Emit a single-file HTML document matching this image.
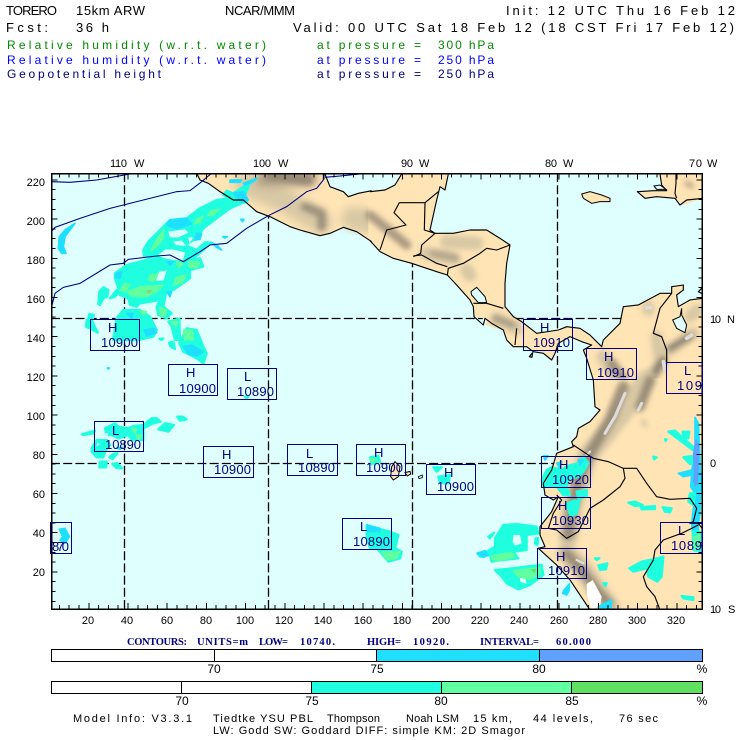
<!DOCTYPE html>
<html><head><meta charset="utf-8"><style>
html,body{margin:0;padding:0;background:#fff;width:740px;height:740px;overflow:hidden}
svg{display:block}
text{font-family:"Liberation Sans",sans-serif;font-size:13px;fill:#000}
.ax text{font-size:11px}
.lb text{font-size:12px}
.f text{font-size:11px}
.h3 text{font-size:12px}
.g text{fill:#008c00}.b text{fill:#0000ff}.n text{fill:#000080}
.c text{font-family:"Liberation Serif",serif;font-weight:bold;font-size:10.5px;fill:#000080}
.cs{fill:none;stroke:#000;stroke-width:3.4;stroke-linejoin:round}
.ctr{fill:none;stroke:#000080;stroke-width:3.2}
.l{fill:#ffe4b5}
.c1{fill:#1fffdf;stroke:#1fffdf;stroke-width:7;stroke-linejoin:round}
.c2{fill:#1fdfff;stroke:#1fdfff;stroke-width:5;stroke-linejoin:round}
.c3{fill:#60ff9f;stroke:#60ff9f;stroke-width:4;stroke-linejoin:round}
.c4{fill:#60e060}
.c5{fill:#60a0ff;stroke:#60a0ff;stroke-width:3;stroke-linejoin:round}
.w{fill:#dfffff}
.t1{fill:none;stroke:#d8c8a4;stroke-linecap:round;stroke-linejoin:round}
.t2{fill:none;stroke:#8f8270;stroke-linecap:round;stroke-linejoin:round}
.t3{fill:none;stroke:#dcdcdc;stroke-linecap:round}
</style></head><body>
<svg width="740" height="740" viewBox="0 0 740 740" xmlns="http://www.w3.org/2000/svg">
<defs>
<clipPath id="m"><rect x="52" y="174" width="650" height="435"/></clipPath>
<filter id="bl" x="-30%" y="-30%" width="160%" height="160%"><feGaussianBlur stdDeviation="14"/></filter>
<filter id="bs" x="-30%" y="-30%" width="160%" height="160%"><feGaussianBlur stdDeviation="8"/></filter>
</defs>
<rect x="0" y="0" width="740" height="740" fill="#fff"/>
<!-- header -->
<text x="6" y="15" textLength="51">TORERO</text><text x="76" y="15" textLength="69">15km ARW</text><text x="225" y="15" textLength="70">NCAR/MMM</text>
<text x="506" y="15" textLength="229">Init: 12 UTC Thu 16 Feb 12</text>
<text x="6" y="32" textLength="42">Fcst:</text><text x="76" y="32" textLength="33">36 h</text>
<text x="293" y="32" textLength="441">Valid: 00 UTC Sat 18 Feb 12 (18 CST Fri 17 Feb 12)</text>
<g class="g h3"><text x="7" y="49" textLength="259">Relative humidity (w.r.t. water)</text><text x="317" y="49" textLength="104">at pressure =</text><text x="438" y="49" textLength="56">300 hPa</text></g>
<g class="b h3"><text x="7" y="64" textLength="259">Relative humidity (w.r.t. water)</text><text x="317" y="64" textLength="104">at pressure =</text><text x="438" y="64" textLength="56">250 hPa</text></g>
<g class="n h3"><text x="7" y="78" textLength="154">Geopotential height</text><text x="317" y="78" textLength="104">at pressure =</text><text x="438" y="78" textLength="56">250 hPa</text></g>
<!-- axis labels -->
<g class="ax">
<text x="110" y="167" textLength="17">110</text><text x="134" y="167">W</text><text x="253" y="167" textLength="18">100</text><text x="278" y="167">W</text><text x="401" y="167" textLength="12">90</text><text x="419" y="167">W</text><text x="545" y="167" textLength="12">80</text><text x="563" y="167">W</text><text x="689" y="167" textLength="13">70</text><text x="707" y="167">W</text>
<text x="710" y="323" textLength="11">10</text><text x="727" y="323">N</text><text x="710" y="467">0</text><text x="710" y="613" textLength="11">10</text><text x="728" y="613">S</text>
<g text-anchor="end"><text x="45" y="186">220</text><text x="45" y="225">200</text><text x="45" y="264">180</text><text x="45" y="303">160</text><text x="45" y="342">140</text><text x="45" y="381">120</text><text x="45" y="420">100</text><text x="45" y="459">80</text><text x="45" y="498">60</text><text x="45" y="537">40</text><text x="45" y="576">20</text></g>
<g text-anchor="middle"><text x="88" y="624">20</text><text x="127" y="624">40</text><text x="167" y="624">60</text><text x="206" y="624">80</text><text x="245" y="624">100</text><text x="284" y="624">120</text><text x="323" y="624">140</text><text x="363" y="624">160</text><text x="402" y="624">180</text><text x="441" y="624">200</text><text x="480" y="624">220</text><text x="519" y="624">240</text><text x="559" y="624">260</text><text x="598" y="624">280</text><text x="637" y="624">300</text><text x="676" y="624">320</text></g>
</g>
<!-- map -->
<g clip-path="url(#m)">
<rect x="51" y="173" width="652" height="437" fill="#dfffff"/>
<g stroke="#000" stroke-width="1.3" stroke-dasharray="9 3.2" fill="none">
<path d="M51 318.5H703M51 463.5H703M124.5 173V610M268.5 173V610M412.5 173V610M557.5 173V610"/>
</g>
<!-- land Mexico: zoom frame 3 -->
<g transform="translate(0 150) scale(.33333)">
<path class="l" d="M585 60L600 90 625 100 660 125 700 150 730 150 770 185 810 200 870 230 900 240 960 257 990 250 1030 232 1070 245 1115 275 1115 120 1075 130 1045 140 1030 125 990 110 970 60Z"/>
<g filter="url(#bl)"><path class="t1" stroke-width="70" d="M740 105L850 150 960 215M1060 205L1110 215"/><path class="t2" stroke-width="45" opacity=".75" d="M790 85L930 85"/></g>
<g filter="url(#bs)"><path class="t2" stroke-width="30" opacity=".8" d="M810 75L925 90"/><path class="t2" stroke-width="26" opacity=".8" d="M915 170L965 190 965 230"/></g>
</g>
<!-- Central America: frame 4 -->
<g transform="translate(370 150) scale(.33333)">
<path class="l" d="M-5 125L0 125 45 120 75 105 95 72 100 60 235 60 225 120 210 110 200 150 180 240 195 250 250 250 300 240 350 240 390 265 420 285 410 340 405 400 405 470 430 500 455 515 500 550 565 540 590 530 630 535 660 555 695 590 700 570 750 520 760 470 805 465 870 430 905 430 905 410 940 405 940 420 920 435 925 470 960 450 1000 445 1000 700 670 700 650 625 640 600 665 585 635 575 600 560 565 580 555 610 545 630 520 610 490 605 470 590 430 590 410 570 400 540 345 525 340 505 312 500 310 470 300 450 260 405 232 375 200 365 155 350 125 340 70 325 30 305 0 272 -5 270Z"/>
<path class="l" stroke="#000" stroke-width="3" d="M635 132L660 125 695 135 720 145 720 155 690 155 665 160 640 145Z"/>
<path class="l" d="M802 125L850 122 890 122 875 105 870 60 1000 60 1000 145 940 165 915 145 860 140 825 145Z"/>
<path class="cs" d="M870 72L875 105 890 122 850 122 802 125 825 145 860 140 915 145 930 165 950 150 998 145M918 72V100L915 130 920 145"/>
<path class="w" stroke="#000" stroke-width="3" d="M852 108L870 105 888 118 860 118Z"/>
<g filter="url(#bs)"><path class="t2" stroke-width="14" opacity=".7" d="M950 100L965 108"/><path class="t2" stroke-width="28" opacity=".75" d="M0 195L50 235 110 285"/><path class="t1" stroke-width="40" d="M170 310L250 325M230 275L320 280M290 360L300 375M380 505L440 535"/><path class="t2" stroke-width="22" opacity=".5" d="M190 310L260 325"/><path class="t2" stroke-width="18" opacity=".7" d="M375 505L430 525"/></g>
<g filter="url(#bs)"><path class="t1" stroke-width="36" d="M835 470L835 480M960 500L980 480M900 600L970 550M860 560L870 640 790 760"/><path class="t1" stroke-width="40" d="M700 620L760 720"/><path class="t2" stroke-width="20" d="M900 595L960 560"/><path class="t2" stroke-width="26" d="M880 630L800 750"/><path class="t2" stroke-width="30" opacity=".8" d="M725 640L760 690"/></g>
<path class="t3" stroke-width="11" d="M830 473L842 473M950 565L965 555M880 635L885 660"/>
<path class="w" stroke="#000" stroke-width="3" d="M303 425L320 412 345 440 350 458 325 458 305 435Z"/>
<path class="w" stroke="#000" stroke-width="3" d="M935 475L930 500 908 510 920 535 945 548 950 525 935 495Z"/>
<path class="w" d="M340 505L352 507 345 525 335 515Z"/>
</g>
<!-- South America: frame 6 -->
<g transform="translate(370 380) scale(.33333)">
<path class="l" d="M670 -5L675 80 690 90 660 125 625 145 620 170 605 185 610 200 560 220 545 270 520 310 525 345 550 360 565 350 545 395 510 440 510 465 525 500 505 505 560 555 600 600 640 660 660 690 1000 690 1000 -5Z"/>
<path class="l" stroke="#000" stroke-width="3" d="M65 260L75 245 90 260 85 290 70 300 62 290Z"/>
<path class="l" stroke="#000" stroke-width="3" d="M105 278L120 274 122 282 112 288Z"/>
<path class="w" stroke="#000" stroke-width="2.5" d="M145 290L157 285 157 293 147 296Z"/>
<g filter="url(#bs)"><path class="t1" stroke-width="60" d="M830 0L780 70 700 170 650 230 630 300 605 390 595 470M590 520L640 570 680 630 720 680"/><path class="t2" stroke-width="34" opacity=".85" d="M760 20L720 120 660 220 625 300 605 390 595 465"/><path class="t2" stroke-width="30" opacity=".85" d="M840 0L810 80M590 520L640 575 680 630 715 670"/><path class="t1" stroke-width="16" d="M820 125L825 135"/></g>
<path class="t3" stroke-width="9" d="M765 40L735 110 705 160"/><path class="t3" stroke-width="9" d="M815 70L805 90"/>
<path fill="#fff" d="M650 612L668 600 695 650 690 680 665 688 652 650Z"/>
<path class="t3" stroke-width="7" d="M660 215L650 225M605 370L612 380M620 540L640 550"/>
</g>
<!-- rain frame 3 -->
<g transform="translate(0 150) scale(.33333)">
<path class="c2" d="M225 220L195 240 178 260 175 295 185 310 198 310 190 290 195 260Z"/>
<path class="c2" d="M722 208L732 208 728 215ZM668 260H682L675 264ZM322 654H328L325 657Z"/>
<path class="c1" d="M770 85L730 110 700 130 680 122 670 135 690 145 650 150 600 175 560 205 510 210 480 240 445 275 430 300 432 320 470 315 495 295 520 295 560 305 552 332 575 330 610 300 635 278 615 277 590 300 555 285 590 265 610 235 650 205 690 175 725 160 740 155 735 135 750 100Z"/>
<path class="c2" d="M770 85L730 100 735 105 760 95ZM690 90L725 90 720 97 690 97ZM700 130L730 125 745 150 725 158ZM510 210L560 205 575 222 530 236 500 225ZM590 250L605 250 600 268 585 270Z"/>
<path class="c3" d="M660 178L632 182 622 198 640 195ZM610 198L590 208 582 222 600 218ZM492 238L472 265 452 303 470 290 490 265Z"/>
<path class="w" d="M505 245L555 238 565 248 535 262 510 262ZM565 262L580 262 568 280ZM520 275L545 272 558 288 528 285ZM510 310L520 302 545 320 530 325Z"/>
<path class="c2" d="M635 278L650 285 665 300 650 292Z"/>
<path class="c1" d="M345 370L380 345 420 335 470 320 500 330 540 335 600 325 610 350 570 360 570 385 520 420 500 420 490 470 515 490 500 505 475 495 470 470 480 450 450 455 420 460 410 470 390 465 385 445 360 435 355 415 345 385Z"/>
<path class="c2" d="M500 335L520 335 510 345ZM350 370L365 365 360 385 345 382ZM500 425L515 425 510 440Z"/>
<path class="c3" d="M565 335L600 335 590 355 565 350ZM530 335L550 340 535 355ZM375 400L390 405 375 425 360 420ZM380 425L420 410 490 405 470 425 440 440 395 440ZM450 375L480 370 460 395 445 390ZM530 380L560 375 545 400 520 405ZM480 472L500 480 495 500 480 495Z"/>
<path fill="#8fd07a" d="M440 420L455 420 450 430 440 430Z"/>
<path class="w" d="M478 365L500 362 490 392 468 392Z"/>
<path class="c1" d="M310 412L325 420 322 440 310 445 300 465 295 462 298 425ZM355 430L345 440 330 445 350 420ZM268 492L282 495 278 507 265 505ZM260 510H275L293 548 270 535 258 530Z"/>
<path class="c1" d="M350 505L370 480 420 480 450 500 470 540 460 560 415 570 340 570 345 530Z"/>
<path class="c2" d="M380 490L400 490 395 505ZM432 540L465 535 470 548 440 558Z"/>
<path class="c3" d="M420 482L440 485 430 495Z"/>
<path class="c1" d="M505 515L538 506 540 570 525 570 515 530ZM507 578L520 575 525 597 512 590ZM478 566H490L485 570Z"/>
<path class="c3" d="M510 515L535 515 528 530Z"/>
<path class="c1" d="M560 535L590 540 610 590 620 610 610 640 590 625 550 605 538 580Z"/>
<path class="c3" d="M550 540L578 540 580 570 555 570Z"/>
<path class="c2" d="M550 590L575 585 610 605 590 618 565 612Z"/>
</g>
<!-- rain frame 5 -->
<g transform="translate(0 380) scale(.33333)">
<path class="c1" d="M245 163L285 152 280 160 250 165ZM315 145L345 130 355 140 385 145 400 138 430 135 455 115 470 115 482 125 460 130 430 145 430 180 395 180 385 165 355 175 335 165 320 165ZM475 148L495 130 522 135 505 155ZM532 110L548 110 560 118 540 122ZM340 222L352 220 338 237 328 232ZM300 245H320L318 262 298 262ZM337 252L352 250 366 265 350 264Z"/>
<path class="c1" d="M275 205L290 180 320 180 330 195 315 215 310 232 290 232 275 215Z"/>
<path class="c3" d="M395 145L410 145 405 160ZM408 165L425 165 415 180Z"/>
<path class="w" d="M315 160L325 160 322 172ZM292 188L300 192 290 198Z"/>
<path class="c2" d="M178 448L195 445 208 470 195 490 180 480 188 470ZM350 203L368 203 360 208Z"/>
<path class="c1" d="M735 50H745L740 55Z"/>
</g>
<!-- rain frame 6 -->
<g transform="translate(370 380) scale(.33333)">
<path class="c1" d="M-10 435L20 445 60 455 85 465 75 505 95 515 90 535 55 545 30 515 20 505 0 505 -10 470Z"/>
<path class="c3" d="M35 515L90 515 80 535 50 540Z"/>
<path class="c2" d="M-8 435L30 445 30 455 -8 455Z"/>
<path class="c1" d="M0 232L25 228 30 245 5 252Z"/><path class="c3" d="M0 235L25 240 5 248Z"/>
<path class="c1" d="M190 262L215 262 200 275ZM205 290L240 285 235 310 210 308Z"/>
<path class="c2" d="M520 228L535 228 525 240Z"/>
<path class="c1" d="M515 300L530 270 545 262 575 268 600 255 625 250 640 230 655 250 640 275 625 290 595 295 590 320 520 320ZM560 320L590 325 600 345 580 345ZM620 335L650 330 650 350 625 355ZM590 372L610 362 628 362 620 400 602 408Z"/>
<path class="c2" d="M560 250L575 245 570 265ZM625 240L640 240 630 255Z"/>
<path class="c1" d="M355 470L372 458 360 475ZM375 475L400 435 440 432 500 440 505 460 470 465 470 510 430 515 445 535 400 540 365 545 360 525 330 530 322 520 350 515 375 500ZM375 570L430 565 480 558 515 555 520 585 480 615 445 628 410 610 395 590ZM497 475L505 475 502 495 495 490Z"/>
<path class="w" d="M430 465L450 465 455 490 435 497 428 485ZM450 595L465 590 470 612 450 605Z"/>
<path class="c3" d="M365 528L390 522 425 518 438 530 385 543 368 540ZM430 572L510 562 510 583 480 598 445 590Z"/>
<path class="c4" d="M482 568L498 565 495 580Z"/>
<path class="c2" d="M322 520L345 512 355 525 340 532Z"/>
<path class="c2" d="M582 630L598 612 598 630 590 645 578 640ZM685 680L725 660 722 688 690 688Z"/>
<path class="c1" d="M685 556L712 550 708 568 690 570ZM675 535H688L680 540ZM700 610H710L707 618Z"/>
<path class="c1" d="M895 155L915 152 975 205 968 210ZM938 155L958 155 955 175 940 172ZM775 368L795 365 818 375 795 378ZM812 382L855 378 855 387 815 388ZM878 382L905 385 900 397 885 395ZM850 230L860 232 852 238ZM885 178L890 178 887 183ZM778 565L815 545 860 535 880 530 875 590 862 605 835 590 830 565 790 575ZM935 648L970 652 970 660 940 655Z"/>
<path class="c2" d="M975 112L985 130 990 230 992 310 990 400 985 430 985 480 970 480 965 430 975 340 962 320 965 285 940 290 925 280 965 270 975 220 975 180Z"/>
<path class="c1" d="M940 232L965 228 975 250 960 252ZM960 340L975 340 970 375 955 365ZM968 455L990 455 990 515 970 510Z"/>
<path class="c3" d="M970 470L988 465 985 510 972 505Z"/>
<path class="c5" d="M978 178L986 195 985 265 975 320 972 265 970 220Z"/>
<path class="c5" d="M975 270L985 270 982 315 970 305Z"/>
</g>
<!-- coast, borders, contours -->
<g transform="translate(0 150) scale(.33333)">
<path class="cs" d="M585 60L600 90 625 100 660 125 700 150 730 150 770 185 810 200 870 230 900 240 960 257 990 250 1030 232 1070 245 1115 275"/>
<path class="cs" d="M970 60L990 110 1030 125 1045 140 1075 130 1115 122"/>
<path class="ctr" d="M155 95L210 97 290 90 390 72"/>
<path class="ctr" d="M155 243L165 232 240 205 330 175 430 150 530 125 570 122 605 95 632 72"/>
<path class="ctr" d="M155 470L165 430 190 412 240 400 330 345 370 340 385 328 470 318 510 315 550 335 600 305 630 285 680 280 740 235 805 197 860 170 920 125 950 115 970 90 970 72M975 82L1020 78 1080 72"/>
</g>
<g transform="translate(370 150) scale(.33333)">
<path class="cs" d="M0 125L45 120 75 105 95 72M235 72L225 120 210 110 200 150 180 240 195 250 250 250 300 240 350 240 390 265 420 285 410 340 405 400 405 470 430 500 455 515 500 550 565 540 590 530 630 535 660 555 695 590 700 570 750 520 760 470 805 465 870 430 905 430 905 410 940 405 940 420 920 435 925 470 960 450 998 445"/>
<path class="cs" d="M0 272L30 305 70 325 125 340 155 350 200 365 232 375 260 405 300 450 310 470 312 500 340 525 345 505 365 520 400 540 410 570 430 590 470 590 490 605 520 610 545 630 555 610 565 580 600 560 635 575 665 585 640 600 650 625 670 690M478 620L488 608 486 622Z"/>
<path class="cs" d="M985 425L998 412V432ZM88 158H165L163 240 195 250 155 285 152 310 130 320M88 158L72 188 108 225 50 240 30 300M165 158L205 125M130 318L155 315 200 340 232 350M232 375L235 355 280 340 330 310 350 295 380 300 420 285M310 460L350 460 400 475M440 535L435 585M905 430L870 475 850 550 875 560 890 600 890 640"/>
</g>
<g transform="translate(370 380) scale(.33333)">
<path class="cs" d="M670 0L675 80 690 90 660 125 625 145 620 170 605 185 610 200 560 220 545 270 520 310 525 345 550 360 565 350 545 395 510 440 510 465 525 500 505 505 560 555 600 600 640 660 660 690"/>
<path class="cs" d="M610 195L640 215 670 235 715 245 760 265 765 295 750 320 700 360 660 385 625 455 590 475 560 450 535 445 550 400 575 360 560 345M760 265L800 265 830 310 860 350 900 358 960 355 980 385 970 425 960 430 1000 430M935 460L880 480 855 510 850 540 820 590 830 620 855 650 870 690M935 460L985 435M985 430L1000 450"/>
</g>
</g>
<!-- ticks -->
<g stroke="#000" fill="none" shape-rendering="crispEdges">
<path stroke-dasharray="1 8.8" stroke-width="4" d="M58.9 175.5H702M58.9 607H702M53.5 601.8V174M700.5 601.8V174"/>
<path stroke-dasharray="1 38.2" stroke-width="6" d="M88.3 176.5H702M88.3 606H702M54.5 572.4V174M699.5 572.4V174"/>
</g>
<rect x="51.75" y="173.75" width="650.5" height="435.5" stroke="#000" stroke-width="1.5" fill="none"/>
<path d="M51 609.3H703" stroke="#000" stroke-width="1"/>
<!-- boxes -->
<g fill="none" stroke="#000080" stroke-width="1" shape-rendering="crispEdges">
<rect x="90.5" y="319.5" width="49" height="31"/><rect x="168.5" y="364.5" width="49" height="31"/><rect x="227.5" y="368.5" width="49" height="31"/><rect x="94.5" y="421.5" width="49" height="30"/><rect x="203.5" y="446.5" width="50" height="31"/><rect x="287.5" y="444.5" width="50" height="31"/><rect x="356.5" y="444.5" width="49" height="31"/><rect x="50.5" y="522.5" width="21" height="31"/><rect x="342.5" y="518.5" width="49" height="31"/><rect x="426.5" y="464.5" width="49" height="30"/><rect x="541.5" y="456.5" width="49" height="31"/><rect x="541.5" y="497.5" width="49" height="31"/><rect x="537.5" y="548.5" width="49" height="30"/><rect x="660.5" y="522.5" width="42" height="31"/><rect x="523.5" y="319.5" width="49" height="31"/><rect x="586.5" y="348.5" width="50" height="31"/><rect x="666.5" y="362.5" width="36" height="31"/>
</g>
<g class="n">
<text x="108" y="332">H</text><text x="101" y="347" textLength="37">10900</text>
<text x="186" y="377">H</text><text x="179" y="393" textLength="37">10900</text>
<text x="244" y="381">L</text><text x="237" y="396" textLength="37">10890</text>
<text x="112" y="435">L</text><text x="105" y="449" textLength="36">10890</text>
<text x="222" y="459">H</text><text x="214" y="474" textLength="37">10900</text>
<text x="306" y="458">L</text><text x="298" y="472" textLength="37">10890</text>
<text x="374" y="457">H</text><text x="366" y="472" textLength="37">10900</text>
<text x="52" y="551" textLength="17">870</text>
<text x="360" y="531">L</text><text x="353" y="546" textLength="37">10890</text>
<text x="444" y="477">H</text><text x="437" y="491" textLength="37">10900</text>
<text x="559" y="469">H</text><text x="552" y="484" textLength="37">10920</text>
<text x="558" y="510">H</text><text x="552" y="525" textLength="37">10930</text>
<text x="556" y="561">H</text><text x="548" y="575" textLength="37">10910</text>
<text x="678" y="535">L</text><text x="671" y="550" textLength="31">1089</text>
<text x="540" y="332">H</text><text x="533" y="347" textLength="37">10910</text>
<text x="604" y="361">H</text><text x="597" y="377" textLength="37">10910</text>
<text x="684" y="375">L</text><text x="677" y="390" textLength="25">109</text>
</g>
<!-- contours line -->
<g class="c"><text x="127" y="645" textLength="60">CONTOURS:</text><text x="197" y="645" textLength="51">UNITS=m</text><text x="259" y="645" textLength="29">LOW=</text><text x="300" y="645" textLength="35">10740.</text><text x="367" y="645" textLength="34">HIGH=</text><text x="413" y="645" textLength="36">10920.</text><text x="480" y="645" textLength="59">INTERVAL=</text><text x="556" y="645" textLength="35">60.000</text></g>
<!-- bars -->
<g stroke="#000" stroke-width="1" shape-rendering="crispEdges">
<rect x="51.5" y="649.5" width="325" height="12" fill="#fff"/><rect x="376.5" y="649.5" width="163" height="12" fill="#1fdfff"/><rect x="539.5" y="649.5" width="163" height="12" fill="#60a0ff"/><path d="M214.5 649.5V661.5"/>
<rect x="51.5" y="681.5" width="260" height="12" fill="#fff"/><rect x="311.5" y="681.5" width="130" height="12" fill="#1fffdf"/><rect x="441.5" y="681.5" width="130" height="12" fill="#60ff9f"/><rect x="571.5" y="681.5" width="131" height="12" fill="#60e060"/><path d="M181.5 681.5V693.5"/>
</g>
<g text-anchor="middle" class="lb"><text x="214" y="673">70</text><text x="377" y="673">75</text><text x="539" y="673">80</text><text x="702" y="673">%</text>
<text x="182" y="705">70</text><text x="312" y="705">75</text><text x="441" y="705">80</text><text x="572" y="705">85</text><text x="702" y="705">%</text></g>
<!-- footer -->
<g class="f"><text x="73" y="722" textLength="119">Model Info: V3.3.1</text><text x="213" y="722" textLength="100">Tiedtke YSU PBL</text><text x="327" y="722" textLength="53">Thompson</text><text x="406" y="722" textLength="53">Noah LSM</text><text x="473" y="722" textLength="39">15 km,</text><text x="533" y="722" textLength="60">44 levels,</text><text x="619" y="722" textLength="39">76 sec</text>
<text x="213" y="734" textLength="312">LW: Godd SW: Goddard DIFF: simple KM: 2D Smagor</text></g>
</svg>
</body></html>
